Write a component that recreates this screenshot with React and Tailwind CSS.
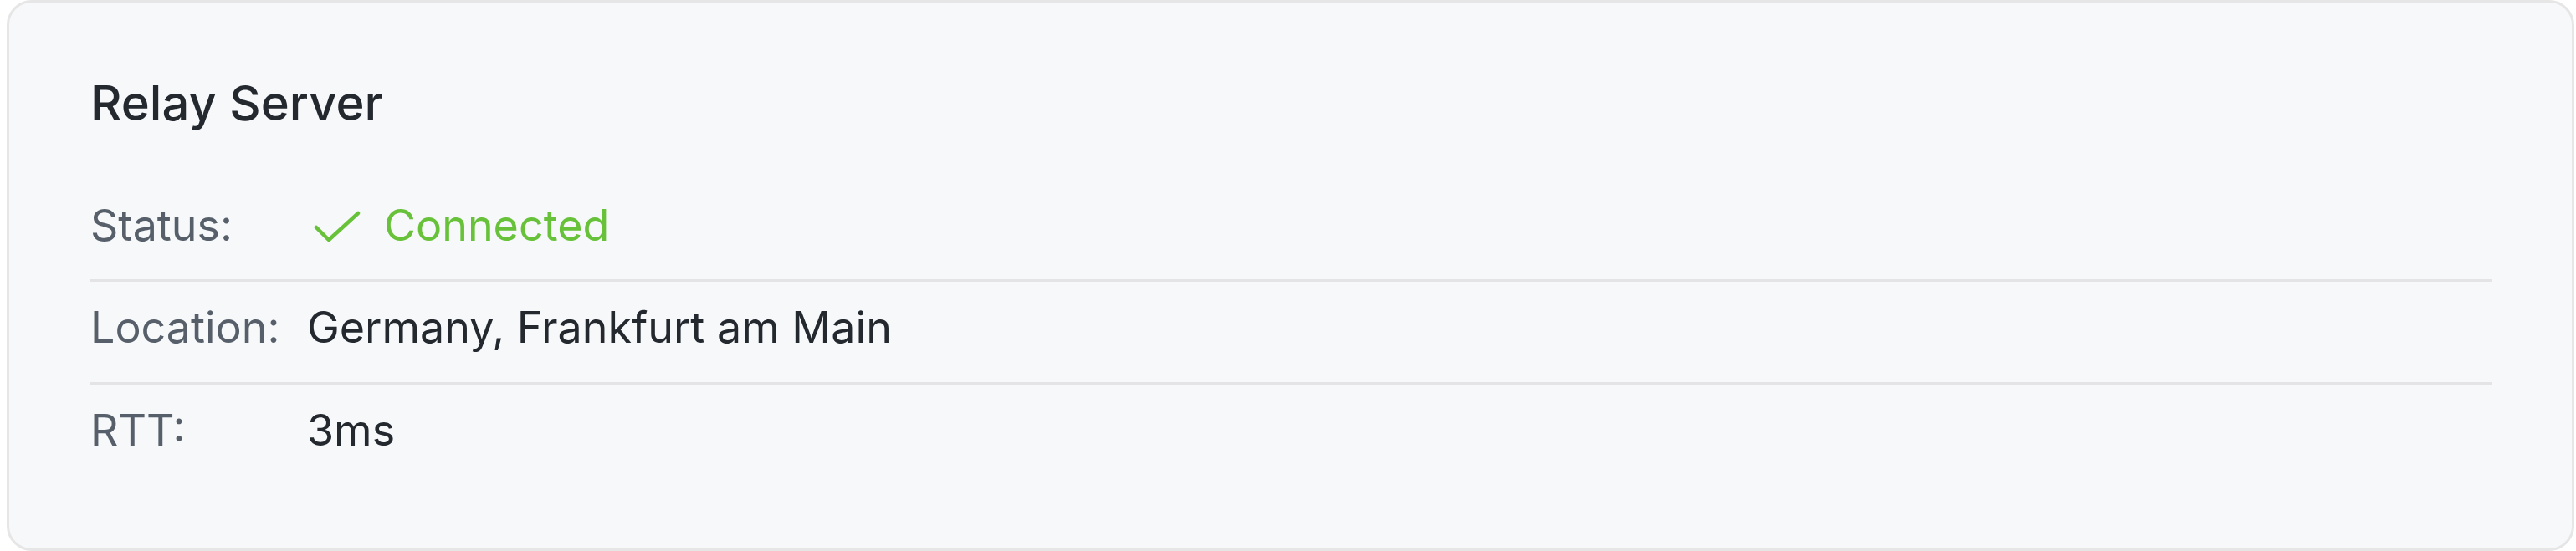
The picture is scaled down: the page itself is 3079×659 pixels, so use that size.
export default function App() {
  const font = { fontFamily: 'Inter, "Noto Sans", sans-serif' };
  return (
    <div className="w-[3079px] h-[659px] bg-white" style={font}>
      <div className="ml-[8px] mr-[2px] h-[659px] box-border border-[3px] border-[#e6e6e6] rounded-[30px] bg-[#f7f8fa] pl-[97px] pr-[95px] pt-[85px]">
        <h2 className="text-[58px] leading-[70px] font-medium text-[#24292f] mb-[57px]">Relay Server</h2>
        <div className="flex flex-col">
          <div className="grid grid-cols-[259px_1fr] pt-[25px] pb-[34px] text-[52px] leading-[60px] border-b-[3px] border-[#e4e4e6]">
            <div className="text-[#57606a]">Status:</div>
            <div className="flex items-center text-[#67c23a]">
              <svg width="70" height="60" viewBox="0 0 70 60" fill="none" className="shrink-0">
                <path d="M11 32 L26 47 L61 15" stroke="#67c23a" strokeWidth="4.5" strokeLinecap="round" strokeLinejoin="round" />
              </svg>
              <span className="ml-[22px]">Connected</span>
            </div>
          </div>
          <div className="grid grid-cols-[259px_1fr] pt-[25px] pb-[35px] text-[52px] leading-[60px] border-b-[3px] border-[#e4e4e6]">
            <div className="text-[#57606a]">Location:</div>
            <div className="text-[#24292f]">Germany, Frankfurt am Main</div>
          </div>
          <div className="grid grid-cols-[259px_1fr] pt-[25px] pb-[35px] text-[52px] leading-[60px]">
            <div className="text-[#57606a]">RTT:</div>
            <div className="text-[#24292f]">3ms</div>
          </div>
        </div>
      </div>
    </div>
  );
}
